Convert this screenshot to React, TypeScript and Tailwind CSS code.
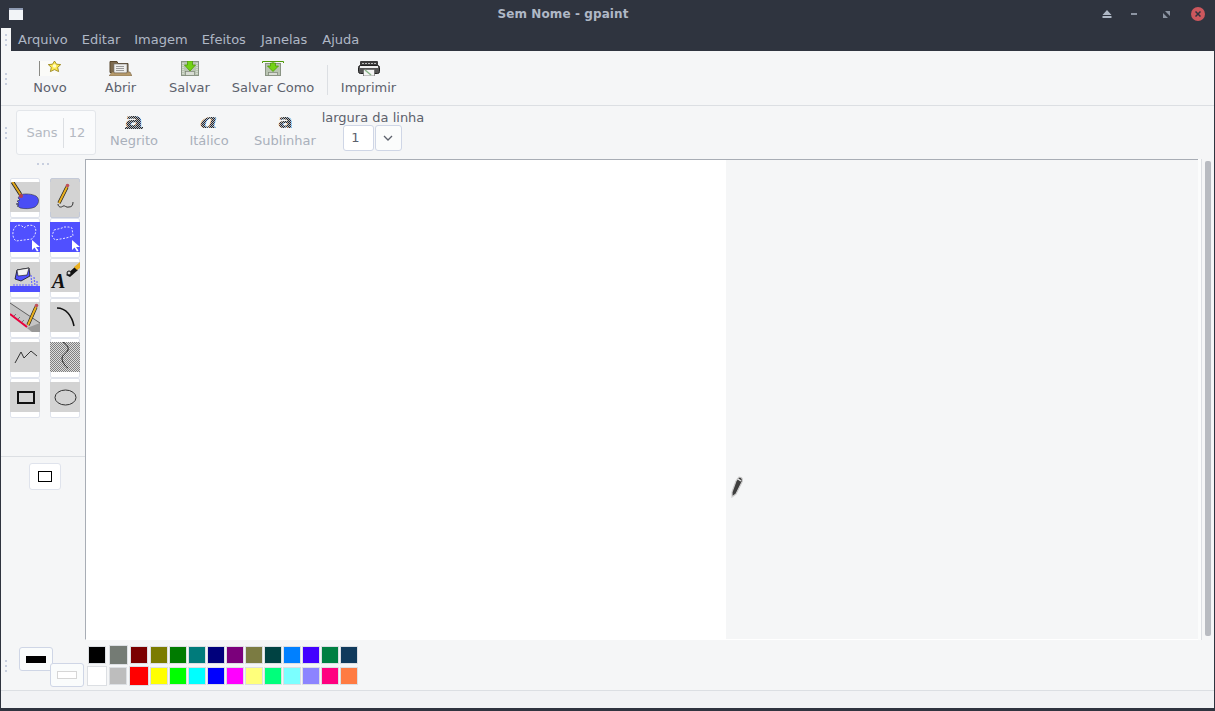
import type { ReactNode } from 'react';

const row1 = [
  { c: '#000000', cls: 'w-[18px] h-[18px] ml-px' },
  { c: '#747b74', cls: 'w-[19px] h-[20px] ml-[3px]' },
  { c: '#7b0000', cls: 'w-[18px] h-[18px] ml-[2px]' },
  { c: '#7b7b00', cls: 'w-[18px] h-[18px] ml-[2px]' },
  { c: '#007b00', cls: 'w-[18px] h-[18px] ml-px' },
  { c: '#007b7b', cls: 'w-[18px] h-[18px] ml-px' },
  { c: '#00007b', cls: 'w-[18px] h-[18px] ml-px' },
  { c: '#7b007b', cls: 'w-[18px] h-[18px] ml-px' },
  { c: '#7b7b42', cls: 'w-[18px] h-[18px] ml-px' },
  { c: '#004242', cls: 'w-[18px] h-[18px] ml-px' },
  { c: '#0080ff', cls: 'w-[18px] h-[18px] ml-px' },
  { c: '#4200ff', cls: 'w-[18px] h-[18px] ml-px' },
  { c: '#008042', cls: 'w-[18px] h-[18px] ml-px' },
  { c: '#103a5c', cls: 'w-[18px] h-[18px] ml-px' },
];
const row2 = [
  { c: '#ffffff', cls: 'w-[20px] h-[20px]' },
  { c: '#bdbdbd', cls: 'w-[18px] h-[18px] ml-[2px]' },
  { c: '#ff0000', cls: 'w-[20px] h-[20px] ml-[2px]' },
  { c: '#ffff00', cls: 'w-[18px] h-[18px] ml-px' },
  { c: '#00ff00', cls: 'w-[18px] h-[18px] ml-px' },
  { c: '#00ffff', cls: 'w-[18px] h-[18px] ml-px' },
  { c: '#0000ff', cls: 'w-[18px] h-[18px] ml-px' },
  { c: '#ff00ff', cls: 'w-[18px] h-[18px] ml-px' },
  { c: '#ffff7b', cls: 'w-[18px] h-[18px] ml-px' },
  { c: '#00ff7b', cls: 'w-[18px] h-[18px] ml-px' },
  { c: '#7bffff', cls: 'w-[18px] h-[18px] ml-px' },
  { c: '#8c84ff', cls: 'w-[18px] h-[18px] ml-px' },
  { c: '#ff0080', cls: 'w-[18px] h-[18px] ml-px' },
  { c: '#ff7b42', cls: 'w-[18px] h-[18px] ml-px' },
];

function Grip() {
  return (
    <div className="flex flex-col gap-[3px] w-[2px]">
      <div className="w-[2px] h-[2px] bg-[#c8cfdf]" />
      <div className="w-[2px] h-[2px] bg-[#c8cfdf]" />
      <div className="w-[2px] h-[2px] bg-[#c8cfdf]" />
    </div>
  );
}

/* toolbar icons */
const NovoIcon = (
  <svg width="22" height="15" viewBox="0 0 22 15">
    <rect x="0" y="0" width="20" height="15" fill="#fbfbf8" />
    <rect x="0" y="0" width="1" height="15" fill="#8a8a85" />
    <path d="M15.500 0l2 3.200 4.200 .4-3 2.800 .9 4.200-4.100-2-4.100 2 .9-4.200-3-2.800 4.200-.4z" fill="#fce94f" stroke="#8f7a10" strokeWidth="0.8" />
    <circle cx="15.500" cy="5" r="1.800" fill="#fffbd0" />
  </svg>
);
const AbrirIcon = (
  <svg width="23" height="15" viewBox="0 0 23 15">
    <path d="M1 .5h7l1 2h10v9H1z" fill="#7d6a4e" stroke="#57462c" />
    <rect x="5" y="3" width="13" height="9" fill="#eeeeec" stroke="#777" strokeWidth="0.6" />
    <path d="M7 5.500h8M7 7.500h8M7 9.500h8" stroke="#999" />
    <path d="M0 15l3-4h2v1h13v-1h3l2 4z" fill="#b59a6b" stroke="#7d6a4e" strokeWidth="0.6" />
  </svg>
);
const SalvarIcon = (
  <svg width="18" height="15" viewBox="0 0 18 15">
    <rect x="0.500" y="0.500" width="17" height="14" fill="#b9c4b2" stroke="#8a9484" />
    <path d="M2 2v11M16 2v11" stroke="#eef0ea" strokeDasharray="1 1" />
    <rect x="4.500" y="10.500" width="9" height="4" fill="#d8dcd4" stroke="#7b8576" strokeWidth="0.7" />
    <path d="M6.500 0h5v4h3L9 10 3.500 4h3z" fill="#73d216" stroke="#4e9a06" strokeWidth="0.8" />
  </svg>
);
const SalvarComoIcon = (
  <svg width="22" height="15" viewBox="0 0 22 15">
    <path d="M.5 2V.5h21V2M11 0v2" fill="none" stroke="#4e9a06" />
    <rect x="3.500" y="2.500" width="15" height="12" fill="#b9c4b2" stroke="#8a9484" />
    <rect x="6.500" y="11.500" width="9" height="3" fill="#d8dcd4" stroke="#7b8576" strokeWidth="0.7" />
    <path d="M8.500 2h5v3h3L11 10.500 5.500 5h3z" fill="#73d216" stroke="#4e9a06" strokeWidth="0.8" />
  </svg>
);
const ImprimirIcon = (
  <svg width="22" height="15" viewBox="0 0 22 15">
    <rect x="2" y="0" width="18" height="5" rx="1" fill="#3c3c3c" />
    <path d="M4 2.500h14" stroke="#bbb" strokeDasharray="2 1" />
    <rect x="0.500" y="4.500" width="21" height="8" rx="2" fill="#555" stroke="#222" />
    <rect x="2" y="5" width="18" height="2" fill="#efefef" />
    <rect x="5.500" y="8.500" width="11" height="6.500" fill="#f4f4f4" stroke="#555" strokeWidth="0.6" />
    <path d="M7 9l6 5" stroke="#8ab58a" strokeWidth="1.500" />
  </svg>
);

function ToolbarButton({ icon, label, className }: { icon: ReactNode; label: string; className: string }) {
  return (
    <div className={`flex flex-col items-center ${className}`}>
      <div className="h-[15px] flex items-center">{icon}</div>
      <span className="mt-[4px] leading-[16px] whitespace-nowrap">{label}</span>
    </div>
  );
}

function HatchA({ variant }: { variant: 'bold' | 'italic' | 'under' }) {
  const fill = `url(#hatch-${variant})`;
  return (
    <svg width="20" height="30" viewBox="0 0 20 30" aria-hidden="true" className="-mt-[11px]">
      <defs>
        <pattern id={`hatch-${variant}`} width="2" height="2" patternUnits="userSpaceOnUse">
          <rect width="2" height="2" fill="#b4b8bd" />
          <rect width="1" height="1" fill="#22262a" />
          <rect x="1" y="1" width="1" height="1" fill="#22262a" />
        </pattern>
      </defs>
      {variant === 'bold' && (
        <>
          <text x="1" y="23" fontFamily="'DejaVu Sans', sans-serif" fontWeight="700" fontSize="21" textLength="18" lengthAdjust="spacingAndGlyphs" fill={fill}>a</text>
          <rect x="1" y="22" width="18" height="2" fill={fill} />
        </>
      )}
      {variant === 'italic' && (
        <text x="1" y="23" fontFamily="'DejaVu Serif', serif" fontStyle="italic" fontWeight="700" fontSize="21" textLength="18" lengthAdjust="spacingAndGlyphs" fill={fill}>a</text>
      )}
      {variant === 'under' && (
        <text x="3" y="23" fontFamily="'DejaVu Sans', sans-serif" fontWeight="700" fontSize="20" textLength="15" lengthAdjust="spacingAndGlyphs" fill={fill}>a</text>
      )}
    </svg>
  );
}

function FontButton({ variant, label, className }: { variant: 'bold' | 'italic' | 'under'; label: string; className: string }) {
  return (
    <div className={`flex flex-col items-center ${className}`}>
      <div className="h-[13px]"><HatchA variant={variant} /></div>
      <span className="mt-[4px] leading-[16px] text-[#a9b0bb] whitespace-nowrap">{label}</span>
    </div>
  );
}

/* tool palette drawings, 30x30 */
const selectArrow = <path d="M22 18v10l2.500-2.500 2.500 4 1.500-1-2.500-3.500H30z" fill="#fff" />;

const toolIcons: { active?: boolean; svg: ReactNode }[] = [
  {
    svg: (
      <svg width="30" height="30" viewBox="0 0 30 30">
        <rect width="30" height="30" fill="#d3d3d3" />
        <path d="M10 13c5-2 12-1 16 1 4 3 3 8-1 11-4 2-10 2-15 1l-1-1-2-1 2-1-3-1 3-1-2-2 3-1-2-2z" fill="#4a4df5" stroke="#222" strokeWidth="0.5" />
        <path d="M2.500 0l8 12.500" stroke="#222" strokeWidth="3.600" />
        <path d="M2.500 0l8 12.500" stroke="#e2a81c" strokeWidth="2" />
        <circle cx="11" cy="14" r="2" fill="#b04050" />
      </svg>
    ),
  },
  {
    active: true,
    svg: (
      <svg width="30" height="30" viewBox="0 0 30 30">
        <rect width="30" height="30" fill="#d3d3d3" />
        <path d="M17 5L9 21" stroke="#1a1a1a" strokeWidth="3.400" />
        <path d="M17 5L9 21" stroke="#eab020" strokeWidth="2" />
        <circle cx="17.500" cy="3.500" r="1.800" fill="#c0505a" />
        <path d="M8 22c0 3 3 4 5 2 2-1 3 2 6 1 3 0 4-2 4-5" fill="none" stroke="#333" strokeWidth="1" />
      </svg>
    ),
  },
  {
    svg: (
      <svg width="30" height="30" viewBox="0 0 30 30">
        <rect width="30" height="30" fill="#5050ff" />
        <path d="M5 5c3-3 7-2 9 1 3-3 8-4 11-1 2 4 0 9-3 12l-8 1-8 1c-4-3-4-10-1-14z" fill="none" stroke="#e4e4ff" strokeWidth="1" strokeDasharray="2 1.500" />
        {selectArrow}
      </svg>
    ),
  },
  {
    svg: (
      <svg width="30" height="30" viewBox="0 0 30 30">
        <rect width="30" height="30" fill="#5050ff" />
        <path d="M4 8l8-2 2-1 5 0 3 1 1 8-7 2-11 2-3-4z" fill="none" stroke="#e4e4ff" strokeWidth="1" strokeDasharray="2 1.500" />
        {selectArrow}
      </svg>
    ),
  },
  {
    svg: (
      <svg width="30" height="30" viewBox="0 0 30 30">
        <rect width="30" height="30" fill="#d3d3d3" />
        <rect x="0" y="24" width="30" height="6" fill="#5050ff" />
        <path d="M7 8l12-2 1 8-9 5-6-2z" fill="#5050ff" stroke="#111" strokeWidth="0.8" />
        <path d="M7 8l12-2-2 7-9 1z" fill="#f2f2f2" stroke="#111" strokeWidth="0.6" />
        <path d="M21 13l1 11M24 15l1 9M27 19v5M3 23h17" stroke="#6a6aff" strokeWidth="1.200" strokeDasharray="2 1" />
      </svg>
    ),
  },
  {
    svg: (
      <svg width="30" height="30" viewBox="0 0 30 30">
        <rect width="30" height="30" fill="#d3d3d3" />
        <text x="2" y="25.500" fontFamily="'Liberation Serif', serif" fontSize="20" fontStyle="italic" fontWeight="700" fill="#111">A</text>
        <path d="M16 13l9-8 3 3-8 7z" fill="#111" />
        <path d="M24 5l6-5v6l-3 2z" fill="#eab020" />
        <circle cx="19" cy="11" r="2" fill="#d3d3d3" stroke="#111" />
      </svg>
    ),
  },
  {
    svg: (
      <svg width="30" height="30" viewBox="0 0 30 30">
        <rect width="30" height="30" fill="#d3d3d3" />
        <path d="M0 1l30 20v9H22L0 13z" fill="#c4c4c4" />
        <path d="M17 26l13-5v9H22z" fill="#999" />
        <path d="M0 1l30 20" stroke="#444" strokeWidth="0.8" />
        <path d="M4 14l2-2M8 17l2-2M12 20l2-2" stroke="#444" strokeWidth="0.6" />
        <path d="M0 12l17 13" stroke="#e8003c" strokeWidth="2" />
        <path d="M26 5L18 23" stroke="#1a1a1a" strokeWidth="3.200" />
        <path d="M26 5L18 23" stroke="#eab020" strokeWidth="2" />
        <circle cx="26.500" cy="3.500" r="1.800" fill="#c0505a" />
      </svg>
    ),
  },
  {
    svg: (
      <svg width="30" height="30" viewBox="0 0 30 30">
        <rect width="30" height="30" fill="#d3d3d3" />
        <path d="M7 6c9 0 15 8 17 18" fill="none" stroke="#111" strokeWidth="1.500" />
      </svg>
    ),
  },
  {
    svg: (
      <svg width="30" height="30" viewBox="0 0 30 30">
        <rect width="30" height="30" fill="#d3d3d3" />
        <path d="M5 21l6-11 3 6 7-7 6 5" fill="none" stroke="#333" strokeWidth="1" />
      </svg>
    ),
  },
  {
    svg: (
      <svg width="30" height="30" viewBox="0 0 30 30">
        <defs>
          <pattern id="checker" width="2" height="2" patternUnits="userSpaceOnUse">
            <rect width="2" height="2" fill="#dcdcdc" />
            <rect width="1" height="1" fill="#808080" />
            <rect x="1" y="1" width="1" height="1" fill="#808080" />
          </pattern>
        </defs>
        <rect width="30" height="30" fill="url(#checker)" />
        <path d="M13 0c3 2 6 5 5 8s-6 5-6 8c0 4 3 8 6 10" fill="none" stroke="#222" strokeWidth="1" />
      </svg>
    ),
  },
  {
    svg: (
      <svg width="30" height="30" viewBox="0 0 30 30">
        <rect width="30" height="30" fill="#d3d3d3" />
        <rect x="8" y="10" width="16" height="11" fill="none" stroke="#111" strokeWidth="2" />
      </svg>
    ),
  },
  {
    svg: (
      <svg width="30" height="30" viewBox="0 0 30 30">
        <rect width="30" height="30" fill="#d3d3d3" />
        <ellipse cx="15.500" cy="15.500" rx="10.500" ry="7.500" fill="none" stroke="#333" strokeWidth="1" />
      </svg>
    ),
  },
];

export default function App() {
  return (
    <div className="w-[1215px] h-[711px] flex flex-col overflow-hidden bg-[#2f343f] font-['DejaVu_Sans',sans-serif] text-[13px] text-[#5c616c]">
      {/* Title bar */}
      <div className="h-[28px] shrink-0 relative flex items-center justify-center pr-[89px]">
        <div className="absolute left-[9px] top-[8px] w-[14px] h-[12px] bg-[#f2f4f7] border-t-[2px] border-[#8f9bb3]" />
        <span className="font-bold text-[12px] tracking-[0.1px] text-[#afb8c6]">Sem Nome - gpaint</span>
        <div className="absolute right-[10px] top-[7px] flex items-center">
          <svg width="10" height="8" viewBox="0 0 10 8" className="mr-[19px]"><path d="M5 0l4.500 5H.5z M.5 6h9V8H.5z" fill="#afb8c6" /></svg>
          <div className="w-[6px] h-[2px] bg-[#8d95a3] mr-[26px]" />
          <svg width="7" height="7" viewBox="0 0 7 7" className="mr-[21px]"><path d="M2 0h5v5z M0 2v5h5z" fill="#8d95a3" /></svg>
          <div className="w-[14px] h-[14px] rounded-full bg-[#cc575d] flex items-center justify-center">
            <svg width="6" height="6" viewBox="0 0 6 6"><path d="M.5.5l5 5M5.500.5l-5 5" stroke="#2f343f" strokeWidth="1.500" /></svg>
          </div>
        </div>
      </div>

      {/* Menu bar */}
      <div className="h-[23px] shrink-0 flex items-center text-[#afb8c6]">
        <div className="ml-[1px] w-[10px] h-[23px] bg-[#f5f6f7] flex items-center justify-center"><Grip /></div>
        <div className="flex ml-[7px] gap-[14px] leading-[23px]">
          <span>Arquivo</span>
          <span>Editar</span>
          <span>Imagem</span>
          <span>Efeitos</span>
          <span className="ml-px">Janelas</span>
          <span className="ml-px">Ajuda</span>
        </div>
      </div>

      {/* Content */}
      <div className="h-[657px] shrink-0 mx-[1px] bg-[#f5f6f7] flex flex-col">
        {/* Main toolbar */}
        <div className="h-[55px] shrink-0 border-b border-[#dcdfe3] flex items-center">
          <div className="ml-[4px] mt-[1px]"><Grip /></div>
          <div className="flex items-start h-full pt-[10px] ml-[25px]">
            <ToolbarButton icon={NovoIcon} label="Novo" className="w-[36px] mr-[36px]" />
            <ToolbarButton icon={AbrirIcon} label="Abrir" className="w-[33px] mr-[31px]" />
            <ToolbarButton icon={SalvarIcon} label="Salvar" className="w-[43px] mr-[20px]" />
            <ToolbarButton icon={SalvarComoIcon} label="Salvar Como" className="w-[84px]" />
            <div className="w-px h-[30px] bg-[#dcdfe3] ml-[12px] mt-[4px]" />
            <ToolbarButton icon={ImprimirIcon} label="Imprimir" className="w-[57px] ml-[12px]" />
          </div>
        </div>

        {/* Font toolbar */}
        <div className="h-[53px] shrink-0 flex items-center">
          <div className="ml-[4px]"><Grip /></div>
          <div className="ml-[9px] w-[80px] h-[45px] bg-[#fafbfc] border border-[#e3e6ea] rounded-[3px] flex items-center text-[#b4b9c2]">
            <div className="w-[47px] h-[30px] border-r border-[#dcdfe3] flex items-center justify-center pl-[4px]">Sans</div>
            <div className="flex-1 text-center pr-[5px]">12</div>
          </div>
          <div className="flex items-start h-full pt-[10px]">
            <FontButton variant="bold" label="Negrito" className="w-[48px] ml-[14px]" />
            <FontButton variant="italic" label="Itálico" className="w-[40px] ml-[31px]" />
            <FontButton variant="under" label="Sublinhar" className="w-[62px] ml-[25px]" />
          </div>
          <div className="ml-[6px] flex flex-col items-center self-start pt-[4px] w-[102px]">
            <span className="leading-[15px] whitespace-nowrap">largura da linha</span>
            <div className="flex gap-[1px] -ml-[2px]">
              <div className="w-[31px] h-[26px] bg-white border border-[#cfd6e6] rounded-[3px] flex items-center justify-center pr-[5px]">1</div>
              <div className="w-[27px] h-[26px] bg-[#fbfcfc] border border-[#cfd6e6] rounded-[3px] flex items-center justify-center">
                <svg width="10" height="6" viewBox="0 0 10 6"><path d="M1 1l4 4 4-4" fill="none" stroke="#5c616c" strokeWidth="1.300" /></svg>
              </div>
            </div>
          </div>
        </div>

        {/* Workspace */}
        <div className="h-[481px] shrink-0 flex">
          <div className="w-[84px] shrink-0 flex flex-col items-stretch">
            <div className="h-[19px] flex items-start justify-center gap-[3px] pt-[4px]">
              <div className="w-[2px] h-[2px] bg-[#c8cfdf]" />
              <div className="w-[2px] h-[2px] bg-[#c8cfdf]" />
              <div className="w-[2px] h-[2px] bg-[#c8cfdf]" />
            </div>
            <div className="grid grid-cols-[30px_30px] gap-x-[10px] justify-start pl-[9px] auto-rows-[40px] h-[279px] border-b border-[#dcdfe3]">
              {toolIcons.map((t, i) => (
                <div key={i} className={`h-[40px] border rounded-[2px] pt-[3px] box-border ${t.active ? 'border-[#c4cad8] bg-[#d3d3d3]' : 'border-[#dfe3ec] bg-white'}`}>
                  <div className="-mx-px">{t.svg}</div>
                </div>
              ))}
            </div>
            <div className="flex justify-center pt-[6px] pl-[4px]">
              <div className="w-[32px] h-[27px] bg-white border border-[#dfe3ec] rounded-[3px] flex items-center justify-center">
                <div className="w-[14px] h-[11px] border border-black" />
              </div>
            </div>
          </div>

          <div className="flex-1 min-w-0 flex">
            <div className="flex-1 min-w-0 flex flex-col">
              <div className="h-[1px] bg-[#a8adb5]" />
              <div className="flex-1 flex relative border-l border-[#a8adb5] border-b border-b-white">
                <div className="w-[640px] bg-white" />
                <svg width="14" height="22" viewBox="0 0 14 22" className="absolute left-[644px] top-[316px]">
                  <path d="M9 1c3 0 4 2 3 5L6 18l-4 3 0-5L6 5z" fill="#3f3f3f" stroke="#cfcfcf" strokeWidth="1.200" />
                  <path d="M8 3l3 2" stroke="#e4e4e4" strokeWidth="1.500" />
                </svg>
              </div>
            </div>
            <div className="w-[3px] shrink-0 bg-[#fbfcfc]" />
            <div className="w-[13px] shrink-0 border-l border-[#dcdfe3] pt-[2px] pl-[3px]">
              <div className="w-[6px] h-[475px] bg-[#b8bbc1] rounded-[2px]" />
            </div>
          </div>
        </div>

        {/* Colour palette */}
        <div className="h-[51px] shrink-0 border-b border-[#dcdfe3] flex">
          <div className="ml-[4px] mt-[20px]"><Grip /></div>
          <div className="relative w-[67px] ml-[12px] h-full shrink-0">
            <div className="absolute left-0 top-[7px] w-[34px] h-[24px] bg-[#fafcfc] border border-[#cfd6e6] rounded-[3px] flex items-center justify-center">
              <div className="w-[20px] h-[7px] bg-black" />
            </div>
            <div className="absolute left-[31px] top-[23px] w-[34px] h-[24px] bg-[#fafcfc] border border-[#cfd6e6] rounded-[3px] flex items-center justify-center">
              <div className="w-[20px] h-[8px] bg-white border border-[#d6d6d6]" />
            </div>
          </div>
          <div className="pt-[5px] ml-[1px]">
            <div className="flex items-center h-[20px]">
              {row1.map((s) => (
                <div key={s.c} className={`border border-[#dcdfe3] ${s.cls}`} style={{ backgroundColor: s.c }} />
              ))}
            </div>
            <div className="flex items-center h-[20px] mt-[1px]">
              {row2.map((s) => (
                <div key={s.c} className={`border border-[#dcdfe3] ${s.cls}`} style={{ backgroundColor: s.c }} />
              ))}
            </div>
          </div>
        </div>

        {/* Status bar */}
        <div className="h-[17px] shrink-0 bg-[#f2f3f5]" />
      </div>
      <div className="flex-1 bg-[#2f343f]" />
    </div>
  );
}
